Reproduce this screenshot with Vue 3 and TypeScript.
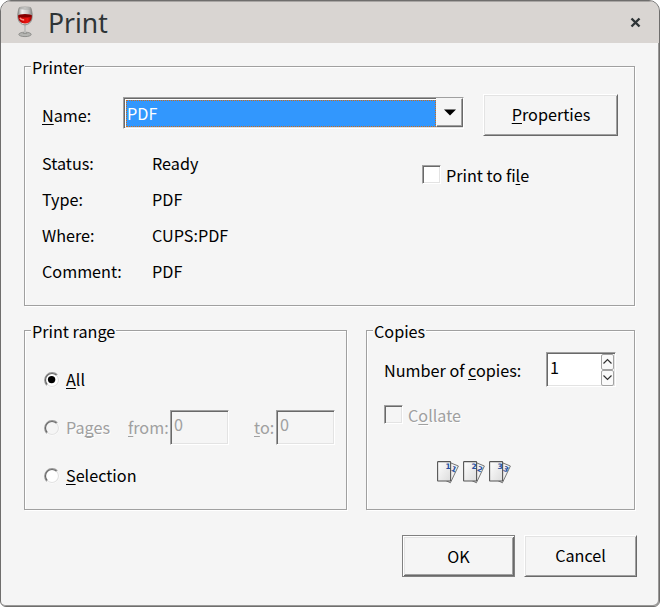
<script setup lang="ts">
import { ref } from 'vue'

const details: { label: string; value: string }[] = [
  { label: 'Status:', value: 'Ready' },
  { label: 'Type:', value: 'PDF' },
  { label: 'Where:', value: 'CUPS:PDF' },
  { label: 'Comment:', value: 'PDF' },
]
const pages: number[] = [1, 2, 3]
const copies = ref(1)
const range = ref<'all' | 'selection'>('all')
const toFile = ref(false)
</script>

<template>
  <main class="window">
    <header class="titlebar">
      <svg class="glass" width="18" height="33" viewBox="0 0 18 33">
        <defs>
          <linearGradient id="bowl" x1="0" x2="1">
            <stop offset="0" stop-color="#8b8b89" />
            <stop offset="0.3" stop-color="#f1f1f0" />
            <stop offset="0.7" stop-color="#c6c6c4" />
            <stop offset="1" stop-color="#858583" />
          </linearGradient>
          <linearGradient id="wine" x1="0" x2="1">
            <stop offset="0" stop-color="#a00000" />
            <stop offset="0.4" stop-color="#d90b08" />
            <stop offset="0.7" stop-color="#ee1712" />
            <stop offset="1" stop-color="#980000" />
          </linearGradient>
        </defs>
        <ellipse cx="9" cy="28.4" rx="6.2" ry="2.2" fill="#b5b5b2" stroke="#82827f" stroke-width="0.8" />
        <path d="M7.5 17h3l-.7 4 .1 5.4 2 1.7H6.1l2-1.7.1-5.4z" fill="#969693" />
        <path d="M9 19v8" stroke="#eee" stroke-width="0.8" />
        <path d="M3.2 1.8C1.8 6 1.3 10 2.2 13.4 3.2 17 6 18.8 9 18.8s5.8-1.8 6.8-5.4c.9-3.4.4-7.4-1-11.6z" fill="url(#bowl)" stroke="#858582" stroke-width="0.8" />
        <path d="M2.2 9.5c-.3 4.9 2.5 8 6.8 8s7.1-3.1 6.8-8z" fill="url(#wine)" />
        <ellipse cx="9" cy="9.8" rx="6.8" ry="1.8" fill="#850000" />
        <path d="M4 11.8q1.1 2.3 4.2 2" stroke="#ff8c80" stroke-width="1.6" fill="none" />
        <ellipse cx="9" cy="2" rx="5.7" ry="1" fill="#dededc" stroke="#8e8e8c" stroke-width="0.7" />
      </svg>
      <h1>Print</h1>
      <svg class="close" width="11" height="11" viewBox="0 0 11 11">
        <path d="M1.5 1.5l8 8M9.5 1.5l-8 8" stroke="#2e3436" stroke-width="2.4" />
      </svg>
    </header>

    <div class="content">
      <section class="group printer">
        <h2>Printer</h2>
        <div class="name-row">
          <span class="name-label"><u>N</u>ame:</span>
          <div class="combo">
            <span class="selected">PDF</span>
            <span class="drop">
              <svg width="12" height="7" viewBox="0 0 12 7"><path d="M0 .5h12L6 6.5z" fill="#000" /></svg>
            </span>
          </div>
          <button class="button properties"><span><u>P</u>roperties</span></button>
        </div>
        <div class="info">
          <dl>
            <template v-for="d in details" :key="d.label">
              <dt>{{ d.label }}</dt>
              <dd>{{ d.value }}</dd>
            </template>
          </dl>
          <div class="check-row" @click="toFile = !toFile">
            <span class="check"></span>
            <span class="check-label">Print to fi<u>l</u>e</span>
          </div>
        </div>
      </section>

      <div class="lower">
        <section class="group range">
          <h2>Print range</h2>
          <div class="option" @click="range = 'all'">
            <svg class="radio" width="16" height="16" viewBox="0 0 16 16">
              <circle cx="8" cy="8" r="7.6" fill="#fff" />
              <path d="M2.7 13.3A7.5 7.5 0 0 1 13.3 2.7" fill="none" stroke="#9a9a9a" stroke-width="1.2" />
              <path d="M3.4 12.6A6.5 6.5 0 0 1 12.6 3.4" fill="none" stroke="#686868" stroke-width="1.2" />
              <path d="M3.4 12.6A6.5 6.5 0 0 0 12.6 3.4" fill="none" stroke="#e3e3e3" stroke-width="1.2" />
              <circle v-if="range === 'all'" cx="7.6" cy="7.6" r="3.7" fill="#000" />
            </svg>
            <span><u>A</u>ll</span>
          </div>
          <div class="option disabled">
            <svg class="radio" width="16" height="16" viewBox="0 0 16 16">
              <circle cx="8" cy="8" r="7.6" fill="#fff" />
              <circle cx="7.8" cy="7.8" r="6.4" fill="#f5f5f5" />
              <path d="M2.7 13.3A7.5 7.5 0 0 1 13.3 2.7" fill="none" stroke="#9a9a9a" stroke-width="1.2" />
              <path d="M3.4 12.6A6.5 6.5 0 0 1 12.6 3.4" fill="none" stroke="#686868" stroke-width="1.2" />
              <path d="M3.4 12.6A6.5 6.5 0 0 0 12.6 3.4" fill="none" stroke="#e3e3e3" stroke-width="1.2" />
            </svg>
            <span class="etched pages">Pa<u>g</u>es</span>
            <span class="from"><u>f</u>rom:</span>
            <span class="field">0</span>
            <span class="to"><u>t</u>o:</span>
            <span class="field">0</span>
          </div>
          <div class="option" @click="range = 'selection'">
            <svg class="radio" width="16" height="16" viewBox="0 0 16 16">
              <circle cx="8" cy="8" r="7.6" fill="#fff" />
              <path d="M2.7 13.3A7.5 7.5 0 0 1 13.3 2.7" fill="none" stroke="#9a9a9a" stroke-width="1.2" />
              <path d="M3.4 12.6A6.5 6.5 0 0 1 12.6 3.4" fill="none" stroke="#686868" stroke-width="1.2" />
              <path d="M3.4 12.6A6.5 6.5 0 0 0 12.6 3.4" fill="none" stroke="#e3e3e3" stroke-width="1.2" />
              <circle v-if="range === 'selection'" cx="7.6" cy="7.6" r="3.7" fill="#000" />
            </svg>
            <span><u>S</u>election</span>
          </div>
        </section>

        <section class="group copies">
          <h2>Copies</h2>
          <div class="count-row">
            <span class="count-label">Number of <u>c</u>opies:</span>
            <div class="spinner">
              <span class="count">{{ copies }}</span>
              <span class="arrows">
                <svg width="13" height="16" viewBox="0 0 13 16" @click="copies++">
                  <rect x=".5" y=".5" width="12" height="15" rx="1.5" fill="#fafafa" stroke="#a3a3a3" />
                  <path d="M2.5 9.5l4-4 4 4" fill="none" stroke="#333" stroke-width="1.2" />
                </svg>
                <svg width="13" height="16" viewBox="0 0 13 16" @click="copies--">
                  <rect x=".5" y=".5" width="12" height="15" rx="1.5" fill="#fafafa" stroke="#a3a3a3" />
                  <path d="M2.5 5.5l4 4 4-4" fill="none" stroke="#333" stroke-width="1.2" />
                </svg>
              </span>
            </div>
          </div>
          <div class="collate">
            <span class="check off"></span>
            <span class="check-label etched">C<u>o</u>llate</span>
          </div>
          <div class="sheets">
            <svg v-for="p in pages" :key="p" width="24" height="25" viewBox="0 0 24 25">
              <defs>
                <linearGradient id="paper" x1="0" y1="0" x2="1" y2="1">
                  <stop offset="0" stop-color="#fff" />
                  <stop offset="1" stop-color="#dcdcdc" />
                </linearGradient>
              </defs>
              <path d="M12 2.2l9.4 3.8-8 16.8-6-3z" fill="#f0f0f0" stroke="#777" stroke-width="1" stroke-linejoin="round" />
              <text x="17" y="11.8" class="num" transform="rotate(24 17 9)">{{ p }}</text>
              <rect x="0.6" y="1.6" width="13" height="19.4" rx="0.6" fill="url(#paper)" stroke="#555" stroke-width="1.1" />
              <text x="11" y="8.6" class="num">{{ p }}</text>
            </svg>
          </div>
        </section>
      </div>

      <footer>
        <button class="button default"><span>OK</span></button>
        <button class="button"><span>Cancel</span></button>
      </footer>
    </div>
  </main>
</template>

<style>
body {
  margin: 0;
  background: #fff;
}
</style>

<style scoped>
* {
  box-sizing: border-box;
}
.window {
  width: 660px;
  height: 607px;
  overflow: hidden;
  border: 1px solid #6f6e6d;
  border-radius: 11px 11px 6px 6px;
  background: #f5f5f5;
  box-shadow: inset -1px -1px 0 #9a9998;
  color: #000;
  font: 16.2px/24px "Noto Sans CJK SC", "Noto Sans", sans-serif;
  white-space: nowrap;
}
u {
  text-decoration: underline;
  text-decoration-thickness: 1px;
  text-underline-offset: 2px;
  text-decoration-skip-ink: none;
}
.titlebar {
  display: flex;
  align-items: center;
  height: 42px;
  padding: 0 18px 0 15px;
  background: #d9d5d2;
  box-shadow: inset 0 1px 0 #a9a6a4;
}
.glass {
  margin-right: 14px;
}
h1 {
  flex: 1;
  margin: 1px 0 0;
  color: #2e3436;
  font: 400 26.5px/36px "Noto Sans", sans-serif;
}
.content {
  display: flex;
  flex-direction: column;
  padding: 23px 22px 0 23px;
}
.group {
  display: flex;
  flex-direction: column;
  border: 1px solid #a0a0a0;
  box-shadow: 1px 1px 0 #fff, inset 1px 1px 0 #fff;
}
h2 {
  align-self: flex-start;
  height: 20px;
  margin: -11px 0 0 6px;
  padding: 0 1px;
  background: #f5f5f5;
  font-size: 16.2px;
  font-weight: 400;
  line-height: 23px;
}
.printer {
  width: 611px;
  height: 240px;
}
.name-row {
  display: flex;
  align-items: flex-start;
  height: 42px;
  margin: 18px 0 0 17px;
}
.name-label {
  width: 81px;
  padding-top: 9px;
}
.combo {
  display: flex;
  width: 341px;
  height: 32px;
  margin-top: 3px;
  padding: 1px;
  border: 1px solid;
  border-color: #a0a0a0 #fff #fff #a0a0a0;
  box-shadow: inset 1px 1px 0 #696969, inset -1px -1px 0 #e3e3e3;
  background: #fff;
}
.selected {
  flex: 1;
  height: 27px;
  margin: 1px 0 0 1px;
  border: 1px dotted #cc6c1a;
  background: #3297fd;
  color: #fff;
  line-height: 25px;
}
.drop {
  display: flex;
  align-items: center;
  justify-content: center;
  width: 27px;
  margin: -1px -1px 0 0;
  border: 1px solid;
  border-color: transparent #696969 #696969 transparent;
  box-shadow: inset -1px -1px 0 #a0a0a0;
  background: #f5f5f5;
}
.button {
  display: flex;
  align-items: center;
  justify-content: center;
  width: 113px;
  height: 42px;
  margin: 0;
  padding: 0 0 2px;
  border: 1px solid;
  border-color: #fff #696969 #696969 #fff;
  box-shadow: inset 1px 1px 0 #e3e3e3, inset -1px -1px 0 #a0a0a0;
  background: #f5f5f5;
  color: #000;
  font: inherit;
}
.properties {
  width: 135px;
  margin-left: 19px;
  padding-left: 1px;
}
.default {
  border-color: #808080;
  box-shadow: inset 1px 1px 0 #fff, inset -1px -1px 0 #696969, inset 2px 2px 0 #e3e3e3, inset -2px -2px 0 #a0a0a0;
}
.default span {
  padding-top: 2px;
}
.info {
  display: flex;
  margin: 9px 0 0 17px;
}
dl {
  display: grid;
  grid-template-columns: 110px 270px;
  grid-auto-rows: 36px;
  margin: 0;
  line-height: 36px;
}
dd {
  margin: 0;
}
.check-row {
  display: flex;
  align-items: flex-start;
  height: 24px;
  margin-top: 20px;
}
.check {
  width: 19px;
  height: 19px;
  border: 1px solid;
  border-color: #a0a0a0 #fff #fff #a0a0a0;
  box-shadow: inset 1px 1px 0 #696969, inset -1px -1px 0 #e3e3e3;
  background: #fff;
}
.check.off {
  background: #f5f5f5;
}
.check-label {
  margin: -2px 0 0 5px;
}
.lower {
  display: flex;
  gap: 19px;
  margin-top: 24px;
}
.range {
  width: 323px;
  height: 180px;
}
.copies {
  width: 269px;
  height: 180px;
}
.option {
  display: flex;
  align-items: center;
  height: 48px;
  margin-left: 19px;
}
.range .option:nth-of-type(1) {
  margin-top: 15px;
}
.radio {
  margin: 1px 6px 0 0;
}
.disabled {
  color: #a0a0a0;
}
.etched {
  color: #a0a0a0;
  text-shadow: 1px 1px 0 #fff;
}
.pages {
  width: 62px;
}
.from {
  width: 42px;
}
.field {
  width: 59px;
  height: 35px;
  margin-top: 1px;
  padding-left: 3px;
  border: 1px solid;
  border-color: #a0a0a0 #fff #fff #a0a0a0;
  box-shadow: inset 1px 1px 0 #696969, inset -1px -1px 0 #e3e3e3;
  line-height: 27px;
}
.to {
  width: 22px;
  margin-left: 25px;
}
.count-row {
  display: flex;
  align-items: flex-start;
  margin: 12px 0 0 17px;
}
.count-label {
  width: 162px;
  padding-top: 6px;
}
.spinner {
  display: flex;
  justify-content: space-between;
  width: 70px;
  height: 35px;
  padding-right: 1px;
  border: 1px solid;
  border-color: #a0a0a0 #fff #fff #a0a0a0;
  box-shadow: inset 1px 1px 0 #696969, inset -1px -1px 0 #e3e3e3;
  background: #fff;
}
.count {
  padding-left: 3px;
  line-height: 29px;
}
.arrows {
  display: flex;
  flex-direction: column;
  padding-top: 1px;
}
.collate {
  display: flex;
  height: 18px;
  margin: 18px 0 0 17px;
}
.sheets {
  display: flex;
  gap: 2px;
  margin: 37px 0 0 70px;
}
.num {
  fill: #2850a0;
  font: 700 7.5px "DejaVu Sans", sans-serif;
  text-anchor: middle;
}
footer {
  display: flex;
  justify-content: flex-end;
  gap: 9px;
  margin: 25px 0 0 0;
}
</style>
